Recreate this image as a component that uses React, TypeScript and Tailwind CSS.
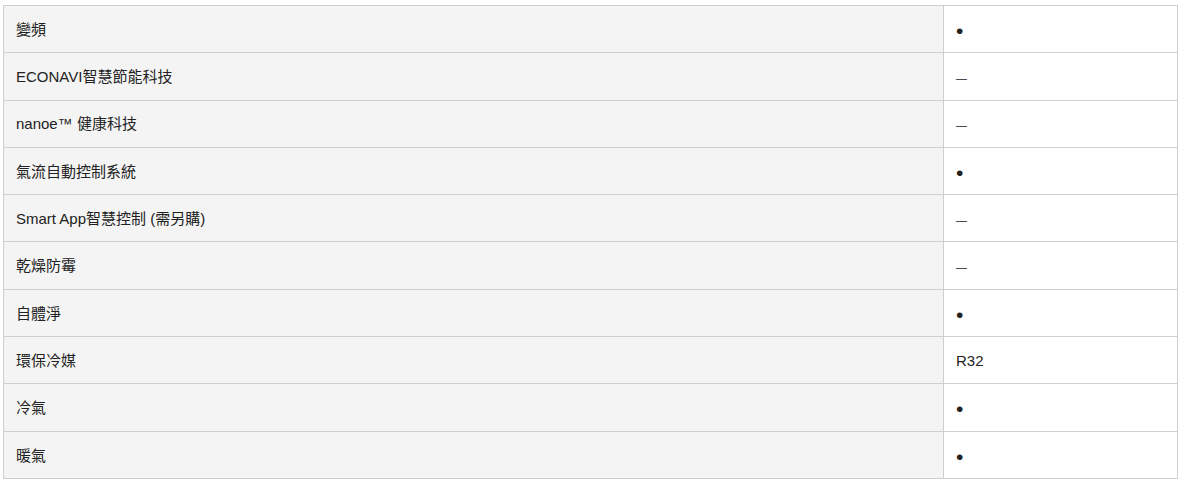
const rows: [string, string][] = [
  ['變頻', '•'],
  ['ECONAVI智慧節能科技', '—'],
  ['nanoe™ 健康科技', '—'],
  ['氣流自動控制系統', '•'],
  ['Smart App智慧控制 (需另購)', '—'],
  ['乾燥防霉', '—'],
  ['自體淨', '•'],
  ['環保冷媒', 'R32'],
  ['冷氣', '•'],
  ['暖氣', '•'],
];

function Value({ v }: { v: string }) {
  if (v === '•') return <span className="relative top-[2px] text-[21px] leading-none">•</span>;
  if (v === '—') return <span className="text-[11px] leading-none">—</span>;
  return <span>{v}</span>;
}

export default function App() {
  return (
    <div className="bg-white pl-[3px] pt-[5px] font-['Liberation_Sans','Noto_Sans_CJK_TC',sans-serif] text-[15px] text-[#222]">
      <table className="w-[1175px] border-collapse">
        <tbody>
          {rows.map(([label, value]) => (
            <tr key={label} className="h-[47.3px]">
              <td className="w-[940px] border border-[#cfcfcf] bg-[#f4f4f4] px-3 pt-[2px] align-middle">{label}</td>
              <td className="border border-[#cfcfcf] bg-white px-3 pt-[2px] align-middle">
                <Value v={value} />
              </td>
            </tr>
          ))}
        </tbody>
      </table>
    </div>
  );
}
